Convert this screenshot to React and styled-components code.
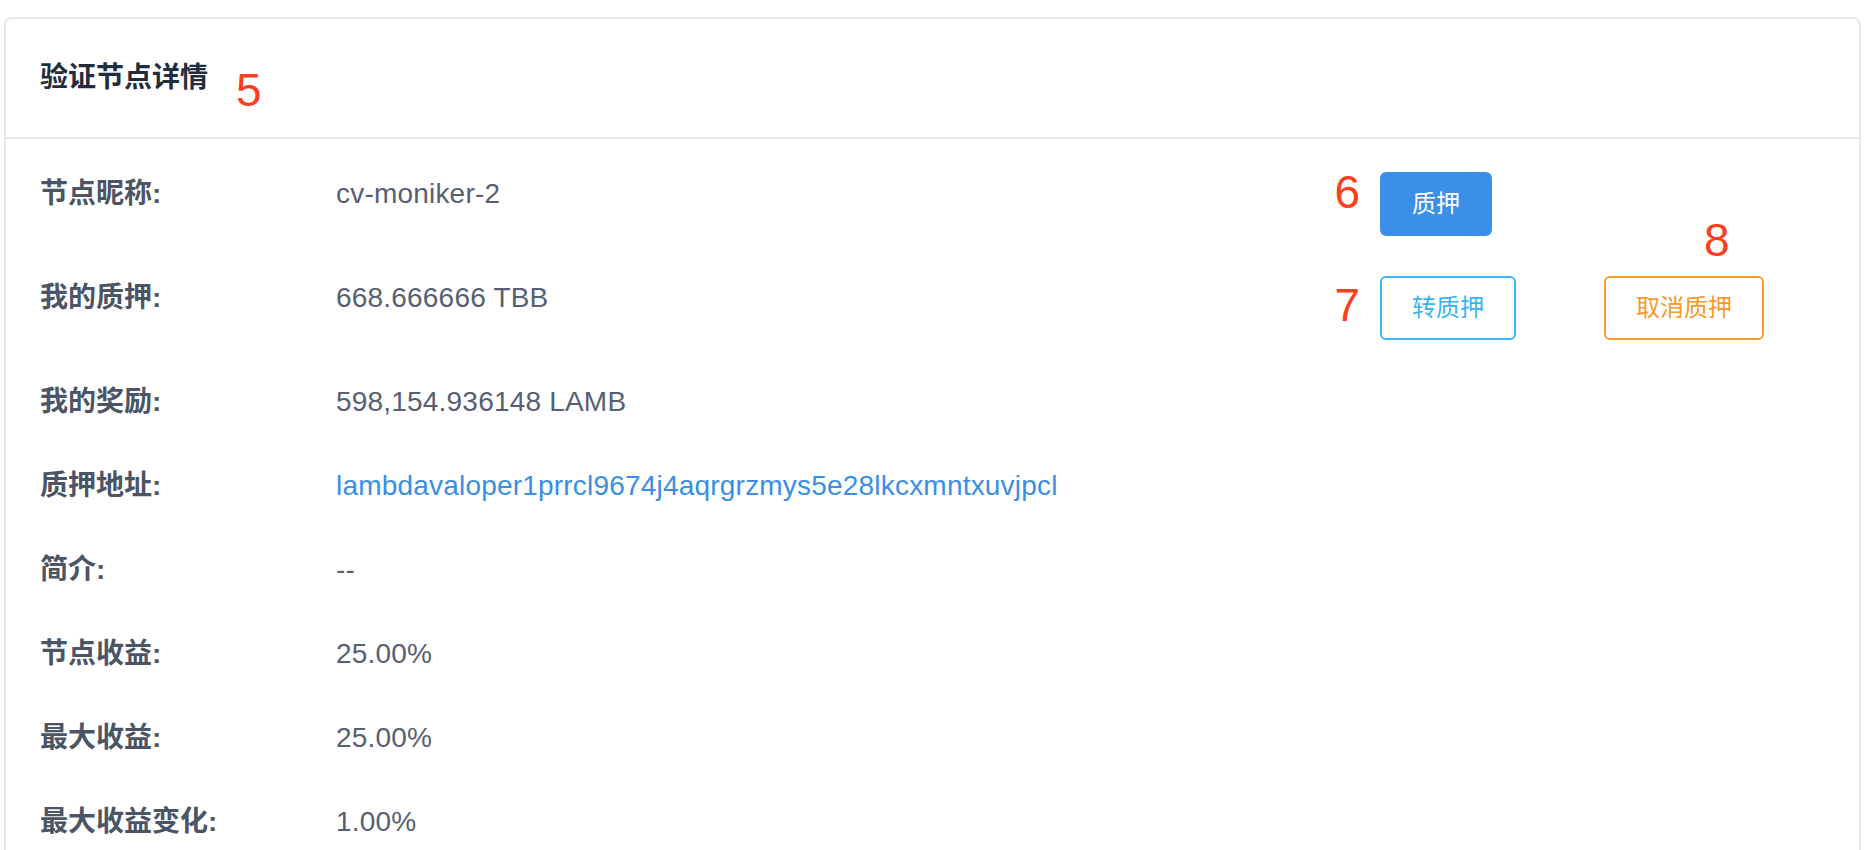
import React from 'react';
import styled, { createGlobalStyle } from 'styled-components';

const GlobalStyle = createGlobalStyle`
  body {
    margin: 0;
    background: #fff;
    font-family: "Liberation Sans", "Noto Sans CJK SC", sans-serif;
  }
`;

const details = [
  { label: '节点昵称:', value: 'cv-moniker-2' },
  { label: '我的质押:', value: '668.666666 TBB' },
  { label: '我的奖励:', value: '598,154.936148 LAMB' },
  { label: '质押地址:', value: 'lambdavaloper1prrcl9674j4aqrgrzmys5e28lkcxmntxuvjpcl', link: true },
  { label: '简介:', value: '--' },
  { label: '节点收益:', value: '25.00%' },
  { label: '最大收益:', value: '25.00%' },
  { label: '最大收益变化:', value: '1.00%' },
];

export default function App() {
  const renderActions = (index) => {
    if (index === 0) {
      return (
        <Actions>
          <Marker $offset={-3}>6</Marker>
          <Button $variant="primary">质押</Button>
        </Actions>
      );
    }
    if (index === 1) {
      return (
        <Actions>
          <Marker $offset={6}>7</Marker>
          <Button $variant="info">转质押</Button>
          <Anchor>
            <FloatingMarker>8</FloatingMarker>
            <Button $variant="warning">取消质押</Button>
          </Anchor>
        </Actions>
      );
    }
    return null;
  };

  return (
    <Page>
      <GlobalStyle />
      <Card>
        <Header>
          <Title>验证节点详情</Title>
          <HeaderMarker>5</HeaderMarker>
        </Header>
        <Body>
          {details.map((item, i) => (
            <Row key={item.label}>
              <Label>{item.label}</Label>
              <Value $link={item.link}>{item.value}</Value>
              {renderActions(i)}
            </Row>
          ))}
        </Body>
      </Card>
    </Page>
  );
}

const Page = styled.div`
  padding: 17px 13px 0 4px;
`;

const Card = styled.div`
  border: 2px solid #e8e8e8;
  border-radius: 8px;
  background: #fff;
  overflow: hidden;
`;

const Header = styled.div`
  display: flex;
  align-items: center;
  height: 118px;
  padding: 0 34px;
  border-bottom: 2px solid #e8e8e8;
`;

const Title = styled.h2`
  margin: 0;
  font-size: 28px;
  line-height: 1;
  font-weight: 700;
  color: #1f2d3d;
`;

const Marker = styled.span`
  display: block;
  width: 80px;
  margin-top: ${(props) => props.$offset || 0}px;
  text-align: right;
  font-size: 46px;
  line-height: 1;
  color: #fc3e1e;
`;

const HeaderMarker = styled(Marker)`
  width: auto;
  margin-left: 28px;
  margin-top: 24px;
  text-align: left;
`;

const FloatingMarker = styled(Marker)`
  position: absolute;
  left: 100px;
  bottom: 100%;
  margin-bottom: 13px;
  width: auto;
  text-align: left;
`;

const Body = styled.div`
  padding: 33px 34px 0;
`;

const Row = styled.div`
  display: grid;
  grid-template-columns: 296px 944px auto;
  align-items: start;
  margin-bottom: 40px;
`;

const Label = styled.div`
  font-size: 28px;
  line-height: 44px;
  font-weight: 700;
  color: #4b5566;
`;

const Value = styled.div`
  font-size: 28px;
  line-height: 44px;
  letter-spacing: 0.2px;
  color: ${(props) => (props.$link ? '#3a8ee6' : '#566072')};
  white-space: nowrap;
`;

const Actions = styled.div`
  display: flex;
  align-items: flex-start;
  gap: 20px;
`;

const Anchor = styled.div`
  position: relative;
  margin-left: 68px;
`;

const variants = {
  primary: { bg: '#3a8fe9', border: '#3a8fe9', color: '#fff' },
  info: { bg: '#fff', border: '#3ab4ef', color: '#3ab4ef' },
  warning: { bg: '#fff', border: '#f8992c', color: '#f8992c' },
};

const Button = styled.button`
  display: block;
  padding: 18px 30px;
  border: 2px solid ${(props) => variants[props.$variant].border};
  border-radius: 6px;
  background: ${(props) => variants[props.$variant].bg};
  color: ${(props) => variants[props.$variant].color};
  font-family: "Liberation Sans", "Noto Sans CJK SC", sans-serif;
  font-size: 24px;
  line-height: 24px;
  white-space: nowrap;
  cursor: pointer;
`;
